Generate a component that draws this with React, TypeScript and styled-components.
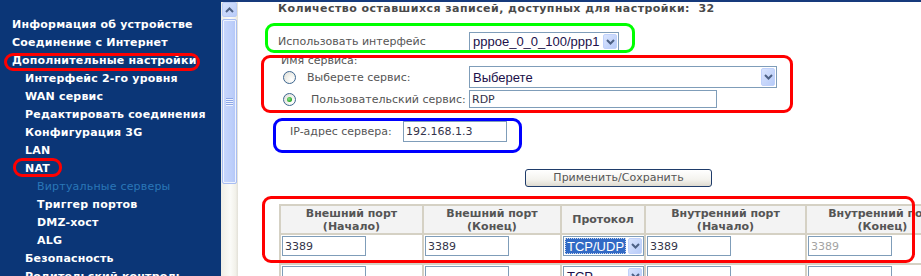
import React from "react";
import styled, { createGlobalStyle } from "styled-components";

const GlobalStyle = createGlobalStyle`
  html, body { margin: 0; padding: 0; background: #ffffff; }
  body { font-family: "DejaVu Sans", Verdana, sans-serif; font-size: 11px; }
  *, *::before, *::after { box-sizing: border-box; }
`;

const Page = styled.div`
  display: flex;
  width: 921px;
  height: 276px;
  overflow: hidden;
  background: #ffffff;
`;

/* ---------- Sidebar ---------- */
const Sidebar = styled.nav`
  flex: none;
  width: 221px;
  padding-top: 16px;
  background: #0b3677;
  display: flex;
  flex-direction: column;
`;

const levelIndent = [12, 25, 37];

const NavItem = styled.div<{ $level: number; $current?: boolean }>`
  position: relative;
  flex: none;
  height: 18px;
  line-height: 18px;
  padding-left: ${(p) => levelIndent[p.$level]}px;
  color: ${(p) => (p.$current ? "#2a76b8" : "#ffffff")};
  font-weight: ${(p) => (p.$current ? "normal" : "bold")};
  letter-spacing: 0.2px;
  white-space: nowrap;
`;

const Mark = styled.span<{ $left: number; $top: number; $width: number; $height: number }>`
  position: absolute;
  left: ${(p) => p.$left}px;
  top: ${(p) => p.$top}px;
  width: ${(p) => p.$width}px;
  height: ${(p) => p.$height}px;
  border: 3px solid #ff0000;
  border-radius: 9px;
  pointer-events: none;
`;

/* ---------- Scrollbar ---------- */
const Scrollbar = styled.div`
  flex: none;
  width: 17px;
  border-top: 2px solid #163a7c;
  padding: 0 1px;
  background: linear-gradient(to right, #efeee6 0%, #fbfbf8 55%, #f2f1ea 85%, #e2e0d8 100%);
  display: flex;
  flex-direction: column;
  gap: 2px;
`;

const ScrollButton = styled.div`
  height: 15px;
  border: 1px solid #b9cbf6;
  border-radius: 2px;
  background: linear-gradient(to bottom right, #d6e2fd, #b9ccf9);
  display: flex;
  align-items: center;
  justify-content: center;
`;

const ScrollThumb = styled.div`
  height: 165px;
  border: 1px solid #a8bdf2;
  border-radius: 2px;
  box-shadow: inset 0 0 0 1px #eef3fe;
  background: linear-gradient(to right, #c9d7fc, #bccefa 70%, #b3c6f6);
  display: flex;
  align-items: center;
  justify-content: center;
`;

const Grip = styled.div`
  width: 7px;
  display: flex;
  flex-direction: column;
  gap: 1px;
  & > span {
    height: 1px;
    background: #8ea7e6;
    box-shadow: 0 1px 0 #eef3fe;
  }
`;

/* ---------- Main ---------- */
const Main = styled.main`
  flex: 1;
  min-width: 0;
  border-top: 2px solid #163a7c;
  display: flex;
  flex-direction: column;
  align-items: flex-start;
  color: #555555;
`;

const Title = styled.div`
  margin-left: 40px;
  line-height: 14px;
  font-weight: bold;
  color: #4a4a4a;
  letter-spacing: 0.45px;
  white-space: pre;
`;

const Annotated = styled.div<{
  $color: string;
  $left: number;
  $top: number;
  $width: number;
  $height: number;
}>`
  position: relative;
  flex: none;
  margin-left: ${(p) => p.$left}px;
  margin-top: ${(p) => p.$top}px;
  width: ${(p) => p.$width}px;
  height: ${(p) => p.$height}px;
  &::after {
    content: "";
    position: absolute;
    inset: 0;
    border: 3px solid ${(p) => p.$color};
    border-radius: 9px;
    pointer-events: none;
  }
`;

const InterfaceRow = styled.div`
  display: flex;
  align-items: center;
  padding: 9px 0 0 13px;
`;

const Label = styled.span<{ $width: number; $indent?: number }>`
  flex: none;
  width: ${(p) => p.$width}px;
  padding-left: ${(p) => p.$indent ?? 0}px;
  white-space: nowrap;
  color: #555555;
`;

const ServiceCaption = styled.div`
  height: 11px;
  line-height: 11px;
  padding-left: 20px;
  color: #555555;
`;

const ServiceRow = styled.div<{ $height: number; $gap?: number }>`
  display: flex;
  align-items: center;
  height: ${(p) => p.$height}px;
  margin-top: ${(p) => p.$gap ?? 0}px;
  padding-left: 22px;
`;

const Radio = styled.span<{ $checked?: boolean }>`
  position: relative;
  flex: none;
  width: 13px;
  height: 13px;
  margin-right: 11px;
  border-radius: 50%;
  border: 1px solid #3d6690;
  background: radial-gradient(circle at 70% 70%, #ffffff 0%, #f4f4f0 35%, #dcdcd5 100%);
  &::after {
    content: "";
    display: ${(p) => (p.$checked ? "block" : "none")};
    position: absolute;
    left: 3px;
    top: 3px;
    width: 5px;
    height: 5px;
    border-radius: 50%;
    background: radial-gradient(circle at 40% 40%, #8ce68c, #21a121 70%);
  }
`;

const SelectBox = styled.div<{ $width: number; $height: number }>`
  flex: none;
  display: flex;
  align-items: center;
  width: ${(p) => p.$width}px;
  height: ${(p) => p.$height}px;
  padding: 1px;
  border: 1px solid #7f9db9;
  background: #ffffff;
  font-family: "Liberation Sans", Arial, sans-serif;
  font-size: 13px;
  color: #20104a;
`;

const SelectValue = styled.span<{ $highlight?: boolean }>`
  flex: 1;
  min-width: 0;
  height: 100%;
  display: flex;
  align-items: center;
  margin-right: 2px;
  padding-left: 2px;
  white-space: nowrap;
  overflow: hidden;
  background: ${(p) => (p.$highlight ? "#316ac5" : "transparent")};
  color: ${(p) => (p.$highlight ? "#ffffff" : "inherit")};
  outline: ${(p) => (p.$highlight ? "1px dotted #c9d6ee" : "none")};
  outline-offset: -1px;
`;

const DropButton = styled.span`
  flex: none;
  width: 14px;
  align-self: stretch;
  border: 1px solid #c0d1fb;
  border-radius: 2px;
  background: linear-gradient(to bottom right, #d9e4fe, #b7cbf8);
  display: flex;
  align-items: center;
  justify-content: center;
`;

const TextInput = styled.input<{ $width: number; $height: number; $muted?: boolean }>`
  flex: none;
  width: ${(p) => p.$width}px;
  height: ${(p) => p.$height}px;
  margin: 0;
  padding: 0 2px;
  border: 1px solid #7f9db9;
  background: #ffffff;
  font-family: "DejaVu Sans", Verdana, sans-serif;
  font-size: 11px;
  color: ${(p) => (p.$muted ? "#a3a3a3" : "#33334a")};
  outline: none;
`;

const ServerRow = styled.div`
  display: flex;
  align-items: center;
  padding: 3px 0 0 17px;
`;

const ApplyButton = styled.button`
  flex: none;
  margin: 16px 0 0 287px;
  width: 187px;
  height: 18px;
  padding: 0;
  border: 1px solid #1f3c6a;
  border-radius: 3px;
  background: linear-gradient(to bottom, #ffffff 0%, #f4f3ee 60%, #dedbd0 100%);
  font-family: "DejaVu Sans", Verdana, sans-serif;
  font-size: 11px;
  line-height: 16px;
  color: #555555;
`;

const TableWrap = styled.div`
  padding: 8px 0 0 17px;
`;

const PortTable = styled.table`
  border-collapse: collapse;
  table-layout: fixed;
  width: 679px;
`;

const HeadCell = styled.th<{ $width: number }>`
  width: ${(p) => p.$width}px;
  height: 29px;
  padding: 0;
  border: 2px solid #d5d1c4;
  background: #f3f3f3;
  font-weight: bold;
  line-height: 13px;
  color: #555555;
  text-align: center;
  vertical-align: middle;
  white-space: nowrap;
  overflow: hidden;
`;

const BodyCell = styled.td`
  height: 30px;
  padding: 1px 0 0 1px;
  border: 2px solid #d5d1c4;
  border-bottom-width: 1px;
  background: #ffffff;
  vertical-align: top;
`;

const Chevron = ({ up }: { up?: boolean }) => (
  <svg width="9" height="6" viewBox="0 0 9 6" aria-hidden="true">
    <path
      d={up ? "M1 5 L4.5 1.5 L8 5" : "M1 1 L4.5 4.5 L8 1"}
      fill="none"
      stroke="#4d6185"
      strokeWidth="2"
    />
  </svg>
);

type NavEntry = {
  text: string;
  level: number;
  current?: boolean;
  mark?: { left: number; top: number; width: number; height: number };
};

const nav: NavEntry[] = [
  { text: "Информация об устройстве", level: 0 },
  { text: "Соединение с Интернет", level: 0 },
  { text: "Дополнительные настройки", level: 0, mark: { left: 4, top: 1, width: 196, height: 18 } },
  { text: "Интерфейс 2-го уровня", level: 1 },
  { text: "WAN сервис", level: 1 },
  { text: "Редактировать соединения", level: 1 },
  { text: "Конфигурация 3G", level: 1 },
  { text: "LAN", level: 1 },
  { text: "NAT", level: 1, mark: { left: 13, top: -2, width: 49, height: 19 } },
  { text: "Виртуальные серверы", level: 2, current: true },
  { text: "Триггер портов", level: 2 },
  { text: "DMZ-хост", level: 2 },
  { text: "ALG", level: 2 },
  { text: "Безопасность", level: 1 },
  { text: "Родительский контроль", level: 1 },
];

const columns = [
  { w: 143, a: "Внешний порт", b: "(Начало)" },
  { w: 138, a: "Внешний порт", b: "(Конец)" },
  { w: 84, a: "Протокол", b: "" },
  { w: 161, a: "Внутренний порт", b: "(Начало)" },
  { w: 153, a: "Внутренний порт", b: "(Конец)" },
];

const rows = [
  { ext1: "3389", ext2: "3389", proto: "TCP/UDP", int1: "3389", int2: "3389", hl: true },
  { ext1: "", ext2: "", proto: "TCP", int1: "", int2: "", hl: false },
];

export default function App() {
  return (
    <>
      <GlobalStyle />
      <Page>
        <Sidebar>
          {nav.map((n) => (
            <NavItem key={n.text} $level={n.level} $current={n.current}>
              {n.text}
              {n.mark && (
                <Mark
                  $left={n.mark.left}
                  $top={n.mark.top}
                  $width={n.mark.width}
                  $height={n.mark.height}
                />
              )}
            </NavItem>
          ))}
        </Sidebar>

        <Scrollbar>
          <ScrollButton>
            <Chevron up />
          </ScrollButton>
          <ScrollThumb>
            <Grip>
              <span />
              <span />
              <span />
              <span />
            </Grip>
          </ScrollThumb>
        </Scrollbar>

        <Main>
          <Title>{"Количество оставшихся записей, доступных для настройки:  32"}</Title>

          <Annotated $color="#00ff00" $left={27} $top={7} $width={370} $height={30}>
            <InterfaceRow>
              <Label $width={191}>Использовать интерфейс</Label>
              <SelectBox $width={150} $height={19}>
                <SelectValue>pppoe_0_0_100/ppp1</SelectValue>
                <DropButton>
                  <Chevron />
                </DropButton>
              </SelectBox>
            </InterfaceRow>
          </Annotated>

          <Annotated $color="#ff0000" $left={23} $top={2} $width={532} $height={58}>
            <ServiceCaption>Имя сервиса:</ServiceCaption>
            <ServiceRow $height={22}>
              <Radio />
              <Label $width={162}>Выберете сервис:</Label>
              <SelectBox $width={308} $height={22}>
                <SelectValue>Выберете</SelectValue>
                <DropButton>
                  <Chevron />
                </DropButton>
              </SelectBox>
            </ServiceRow>
            <ServiceRow $height={18} $gap={2}>
              <Radio $checked />
              <Label $width={162} $indent={4}>
                Пользовательский сервис:
              </Label>
              <TextInput $width={248} $height={18} readOnly value="RDP" />
            </ServiceRow>
          </Annotated>

          <Annotated $color="#0000ff" $left={35} $top={5} $width={249} $height={35}>
            <ServerRow>
              <Label $width={113}>IP-адрес сервера:</Label>
              <TextInput $width={104} $height={21} readOnly value="192.168.1.3" />
            </ServerRow>
          </Annotated>

          <ApplyButton type="button">Применить/Сохранить</ApplyButton>

          <Annotated $color="#ff0000" $left={24} $top={9} $width={653} $height={67}>
            <TableWrap>
              <PortTable>
                <thead>
                  <tr>
                    {columns.map((c, i) => (
                      <HeadCell key={i} $width={c.w}>
                        {c.a}
                        {c.b && (
                          <>
                            <br />
                            {c.b}
                          </>
                        )}
                      </HeadCell>
                    ))}
                  </tr>
                </thead>
                <tbody>
                  {rows.map((r, i) => (
                    <tr key={i}>
                      <BodyCell>
                        <TextInput $width={84} $height={20} readOnly value={r.ext1} />
                      </BodyCell>
                      <BodyCell>
                        <TextInput $width={84} $height={20} readOnly value={r.ext2} />
                      </BodyCell>
                      <BodyCell>
                        <SelectBox $width={81} $height={20}>
                          <SelectValue $highlight={r.hl}>{r.proto}</SelectValue>
                          <DropButton>
                            <Chevron />
                          </DropButton>
                        </SelectBox>
                      </BodyCell>
                      <BodyCell>
                        <TextInput $width={84} $height={20} readOnly value={r.int1} />
                      </BodyCell>
                      <BodyCell>
                        <TextInput $width={84} $height={20} readOnly value={r.int2} $muted />
                      </BodyCell>
                    </tr>
                  ))}
                </tbody>
              </PortTable>
            </TableWrap>
          </Annotated>
        </Main>
      </Page>
    </>
  );
}
